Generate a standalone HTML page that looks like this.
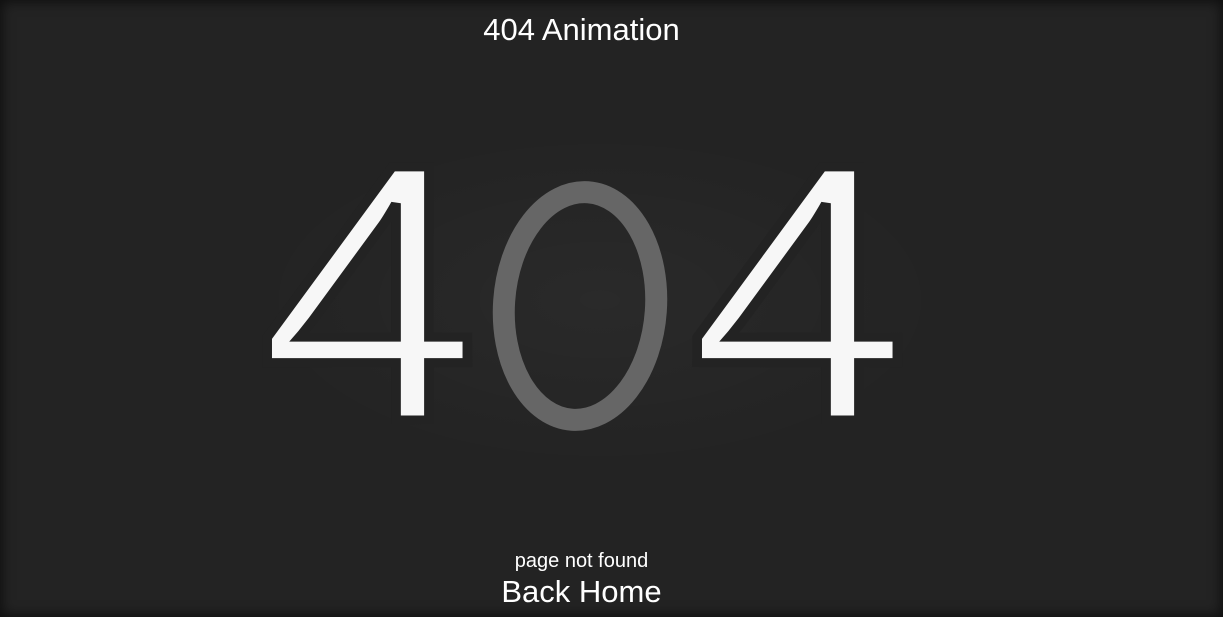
<!DOCTYPE html>
<html><head><meta charset="utf-8"><style>
html,body{margin:0;padding:0;width:1223px;height:617px;overflow:hidden;background:#232323;}
body{position:relative;font-family:"Liberation Sans",sans-serif;color:#fff;box-shadow:inset 0 0 12px 2px rgba(0,0,0,.6);}
.t{position:absolute;left:0;width:1163px;text-align:center;}
.title{top:12px;font-size:31px;}
.glow{position:absolute;left:250px;top:130px;width:700px;height:340px;border-radius:50%;background:radial-gradient(ellipse at center,rgba(255,255,255,.03),rgba(0,0,0,0) 70%);}
.d{position:absolute;font-size:368px;line-height:1;top:109px;color:#f7f7f7;-webkit-text-stroke:9px #232323;transform:scaleX(1.08);transform-origin:0 0;}
.z{position:absolute;left:492px;top:180px;width:176px;height:252px;}
.pnf{top:550px;font-size:20px;}
.bh{top:574px;font-size:31px;}
</style></head><body>
<div class="glow"></div>
<div class="t title">404 Animation</div>
<div class="d" style="left:258px">4</div>
<svg class="z" viewBox="0 0 176 252"><ellipse cx="88" cy="126" rx="76" ry="114" fill="none" stroke="#666" stroke-width="22" transform="rotate(4 88 126)"/></svg>
<div class="d" style="left:688px">4</div>
<div class="t pnf">page not found</div>
<div class="t bh">Back Home</div>
</body></html>
